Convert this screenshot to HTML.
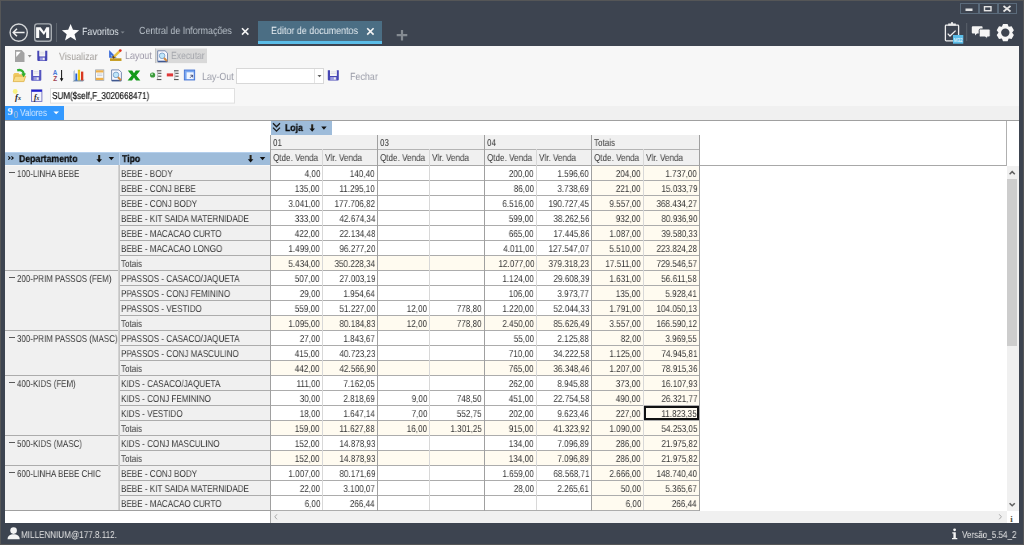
<!DOCTYPE html><html><head><meta charset="utf-8"><style>
*{margin:0;padding:0;box-sizing:border-box}
html,body{width:1024px;height:545px;overflow:hidden;background:#3d4450;font-family:"Liberation Sans",sans-serif}
body{position:relative}
.a{position:absolute}
.t{position:absolute;white-space:nowrap;font-size:10px;line-height:14px;height:14px;transform:scale(0.81,1);transform-origin:0 0;color:#363636;text-rendering:geometricPrecision;will-change:transform}
.tr{transform-origin:100% 0}
.b{font-weight:bold;transform:scaleX(0.87);color:#0a0a0a;-webkit-text-stroke:0.25px #0a0a0a}
.tt{font-size:10.4px;transform:scaleX(0.86)}
svg{position:absolute;overflow:visible}
</style></head><body><div class="a" style="left:0px;top:0px;width:1024px;height:545px;background:#3d4450;"></div>
<div class="a" style="left:5px;top:46px;width:1014px;height:477px;background:#f7f7f7;"></div>
<div class="a" style="left:5px;top:106px;width:1014px;height:14px;background:#f0f0f0;"></div>
<div class="a" style="left:5px;top:121px;width:1014px;height:402px;background:#ffffff;"></div>
<div class="a" style="left:258px;top:21px;width:124px;height:23px;background:#4b6e84;"></div>
<div class="a" style="left:258px;top:41px;width:124px;height:3px;background:#5bbde8;"></div>
<div class="a" style="left:271px;top:121px;width:61px;height:14px;background:#9ebcda;"></div>
<div class="a" style="left:270px;top:135px;width:429px;height:30px;background:#f0f0f0;"></div>
<div class="a" style="left:5px;top:152px;width:114px;height:13px;background:#9ebcda;"></div>
<div class="a" style="left:120px;top:152px;width:150px;height:13px;background:#9ebcda;"></div>
<div class="a" style="left:5px;top:166px;width:265px;height:344px;background:#f0f0f0;"></div>
<div class="a" style="left:592px;top:166px;width:107px;height:344px;background:#fffbf0;"></div>
<div class="a" style="left:271px;top:256px;width:320px;height:14px;background:#fffbf0;"></div>
<div class="a" style="left:271px;top:316px;width:320px;height:14px;background:#fffbf0;"></div>
<div class="a" style="left:271px;top:361px;width:320px;height:14px;background:#fffbf0;"></div>
<div class="a" style="left:271px;top:421px;width:320px;height:14px;background:#fffbf0;"></div>
<div class="a" style="left:271px;top:451px;width:320px;height:14px;background:#fffbf0;"></div>
<div class="a" style="left:644px;top:406px;width:55px;height:14px;border:2px solid #111;z-index:2"></div>
<div class="a" style="left:9px;top:172px;width:6px;height:1px;background:#5a5a5a;"></div>
<div class="a" style="left:9px;top:277px;width:6px;height:1px;background:#5a5a5a;"></div>
<div class="a" style="left:9px;top:337px;width:6px;height:1px;background:#5a5a5a;"></div>
<div class="a" style="left:9px;top:382px;width:6px;height:1px;background:#5a5a5a;"></div>
<div class="a" style="left:9px;top:442px;width:6px;height:1px;background:#5a5a5a;"></div>
<div class="a" style="left:9px;top:472px;width:6px;height:1px;background:#5a5a5a;"></div>
<div class="a" style="left:1007px;top:166px;width:12px;height:345px;background:#f0f0f0;"></div>
<div class="a" style="left:1007px;top:179px;width:10px;height:167px;background:#cdcdcd;"></div>
<div class="a" style="left:271px;top:511px;width:736px;height:12px;background:#f0f0f0;"></div>
<div class="a" style="left:5px;top:120px;width:1014px;height:1px;background:#a0a0a0"></div>
<div class="a" style="left:0px;top:0px;width:1024px;height:1px;background:#555657"></div>
<div class="a" style="left:0px;top:0px;width:1px;height:545px;background:#555657"></div>
<div class="a" style="left:1023px;top:0px;width:1px;height:545px;background:#555657"></div>
<div class="a" style="left:0px;top:544px;width:1024px;height:1px;background:#555657"></div>
<div class="a" style="left:56px;top:23px;width:1px;height:19px;background:#5c636c"></div>
<div class="a" style="left:270px;top:149px;width:429px;height:1px;background:#b4b4b4"></div>
<div class="a" style="left:270px;top:165px;width:736px;height:1px;background:#a8a8a8"></div>
<div class="a" style="left:5px;top:165px;width:265px;height:1px;background:#f6f6f6"></div>
<div class="a" style="left:120px;top:180px;width:579px;height:1px;background:#acacac"></div>
<div class="a" style="left:120px;top:195px;width:579px;height:1px;background:#acacac"></div>
<div class="a" style="left:120px;top:210px;width:579px;height:1px;background:#acacac"></div>
<div class="a" style="left:120px;top:225px;width:579px;height:1px;background:#acacac"></div>
<div class="a" style="left:120px;top:240px;width:579px;height:1px;background:#acacac"></div>
<div class="a" style="left:120px;top:255px;width:579px;height:1px;background:#acacac"></div>
<div class="a" style="left:120px;top:270px;width:579px;height:1px;background:#acacac"></div>
<div class="a" style="left:120px;top:285px;width:579px;height:1px;background:#acacac"></div>
<div class="a" style="left:120px;top:300px;width:579px;height:1px;background:#acacac"></div>
<div class="a" style="left:120px;top:315px;width:579px;height:1px;background:#acacac"></div>
<div class="a" style="left:120px;top:330px;width:579px;height:1px;background:#acacac"></div>
<div class="a" style="left:120px;top:345px;width:579px;height:1px;background:#acacac"></div>
<div class="a" style="left:120px;top:360px;width:579px;height:1px;background:#acacac"></div>
<div class="a" style="left:120px;top:375px;width:579px;height:1px;background:#acacac"></div>
<div class="a" style="left:120px;top:390px;width:579px;height:1px;background:#acacac"></div>
<div class="a" style="left:120px;top:405px;width:579px;height:1px;background:#acacac"></div>
<div class="a" style="left:120px;top:420px;width:579px;height:1px;background:#acacac"></div>
<div class="a" style="left:120px;top:435px;width:579px;height:1px;background:#acacac"></div>
<div class="a" style="left:120px;top:450px;width:579px;height:1px;background:#acacac"></div>
<div class="a" style="left:120px;top:465px;width:579px;height:1px;background:#acacac"></div>
<div class="a" style="left:120px;top:480px;width:579px;height:1px;background:#acacac"></div>
<div class="a" style="left:120px;top:495px;width:579px;height:1px;background:#acacac"></div>
<div class="a" style="left:120px;top:510px;width:579px;height:1px;background:#acacac"></div>
<div class="a" style="left:5px;top:270px;width:115px;height:1px;background:#acacac"></div>
<div class="a" style="left:5px;top:330px;width:115px;height:1px;background:#acacac"></div>
<div class="a" style="left:5px;top:375px;width:115px;height:1px;background:#acacac"></div>
<div class="a" style="left:5px;top:435px;width:115px;height:1px;background:#acacac"></div>
<div class="a" style="left:5px;top:465px;width:115px;height:1px;background:#acacac"></div>
<div class="a" style="left:5px;top:510px;width:115px;height:1px;background:#a0a0a0"></div>
<div class="a" style="left:270px;top:135px;width:1px;height:376px;background:#a0a0a0"></div>
<div class="a" style="left:322px;top:149px;width:1px;height:361px;background:#d8d8d8"></div>
<div class="a" style="left:377px;top:135px;width:1px;height:376px;background:#a0a0a0"></div>
<div class="a" style="left:429px;top:149px;width:1px;height:361px;background:#d8d8d8"></div>
<div class="a" style="left:484px;top:135px;width:1px;height:376px;background:#a0a0a0"></div>
<div class="a" style="left:536px;top:149px;width:1px;height:361px;background:#d8d8d8"></div>
<div class="a" style="left:591px;top:135px;width:1px;height:376px;background:#a0a0a0"></div>
<div class="a" style="left:643px;top:149px;width:1px;height:361px;background:#d8d8d8"></div>
<div class="a" style="left:699px;top:135px;width:1px;height:376px;background:#a0a0a0"></div>
<div class="a" style="left:118px;top:165px;width:1px;height:346px;background:#d2d2d2"></div>
<div class="a" style="left:119px;top:165px;width:1px;height:346px;background:#c4c4c4"></div>
<div class="a" style="left:1006px;top:121px;width:1px;height:45px;background:#b0b0b0"></div>
<div class="a" style="left:270px;top:511px;width:1px;height:12px;background:#a8a8a8"></div>
<div class="a" style="left:5px;top:510px;width:265px;height:1px;background:#a0a0a0"></div>
<svg style="left:0;top:0" width="140" height="46"><circle cx="18.7" cy="32.6" r="8.6" fill="none" stroke="#d4d6d8" stroke-width="1.4"/><path d="M13.3 32.5H24.6M17 28.7L13.2 32.5L17 36.3" fill="none" stroke="#f0f0f0" stroke-width="1.5"/><rect x="34.7" y="23.9" width="16.6" height="17.4" rx="2.5" fill="none" stroke="#a8adb2" stroke-width="1.4"/><path d="M36.1 38.1V27.2H40.7L43.9 31.7L46.3 27.2H49.2V38.1H46.1V31.6L43.9 34.9L39.2 29.6V38.1Z" fill="#fafafa"/><path d="M70.6 23.9L73 29.8L79.2 30.2L74.5 34.3L76.2 40.6L70.6 37.1L65 40.6L66.7 34.3L61.9 30.2L68.2 29.8Z" fill="#fcfcfc"/><path d="M120.6 31.4H124.6L122.6 33.6Z" fill="#7f868e"/></svg>
<svg style="left:0;top:0" width="420" height="46"><path d="M242 28.2L248.4 34.6M248.4 28.2L242 34.6" stroke="#f4f4f4" stroke-width="1.6"/><path d="M367.2 28.2L373.6 34.6M373.6 28.2L367.2 34.6" stroke="#f4f4f4" stroke-width="1.6"/><path d="M402 30V40.5M396.7 35.2H407.3" stroke="#858b92" stroke-width="2.2"/></svg>
<svg style="left:950px;top:0" width="74" height="50"><rect x="10.5" y="3.5" width="18" height="10" fill="none" stroke="#5b6b7b"/><rect x="29.5" y="3.5" width="18" height="10" fill="none" stroke="#5b6b7b"/><rect x="48.5" y="3.5" width="18" height="10" fill="none" stroke="#5b6b7b"/><rect x="15.5" y="8.5" width="7" height="2.5" fill="#e4e4e4"/><rect x="34.5" y="6.7" width="6.5" height="4" fill="none" stroke="#e4e4e4" stroke-width="1.4"/><path d="M53.5 6L60.5 11.5M60.5 6L53.5 11.5" stroke="#e8e8e8" stroke-width="1.7"/><rect x="-4.6" y="25.2" width="13.2" height="15.6" rx="0.8" fill="none" stroke="#eeeeee" stroke-width="1.3"/><path d="M-1.2 25.5V24.2H5.2V25.5" fill="#eeeeee" stroke="#eeeeee" stroke-width="1.2"/><circle cx="2" cy="23.2" r="1.1" fill="#eeeeee"/><path d="M-2.3 33.6L0 36L5.6 30.6" fill="none" stroke="#eeeeee" stroke-width="1.3"/><rect x="3" y="35" width="10.3" height="8.7" fill="#5bbde8"/><text x="8.2" y="42" font-size="5.6" fill="#ffffff" text-anchor="middle" font-family="Liberation Sans" transform="translate(8.2 0) scale(0.8 1) translate(-8.2 0)">M32</text><path d="M16.7 23V41" stroke="#5a616b" stroke-width="1"/><path d="M22.8 26.3H31.6Q32.6 26.3 32.6 27.3V32.6Q32.6 33.6 31.6 33.6H27L25 35.6V33.6H22.8Q21.8 33.6 21.8 32.6V27.3Q21.8 26.3 22.8 26.3Z" fill="#f4f4f4"/><path d="M30.4 29H39Q40.2 29 40.2 30.2V35.8Q40.2 37 39 37H37.6L35.4 39.2V37H30.4Q29.2 37 29.2 35.8V30.2Q29.2 29 30.4 29Z" fill="#f4f4f4" stroke="#3d4450" stroke-width="1"/></svg>
<svg style="left:0;top:0" width="1024" height="50"><path fill-rule="evenodd" fill="#f6f6f6" d="M1001.99,26.54 L1003.01,24.00 L1007.59,24.00 L1008.61,26.54 L1008.89,26.71 L1011.60,26.32 L1013.89,30.28 L1012.20,32.44 L1012.20,32.76 L1013.89,34.92 L1011.60,38.88 L1008.89,38.49 L1008.61,38.66 L1007.59,41.20 L1003.01,41.20 L1001.99,38.66 L1001.71,38.49 L999.00,38.88 L996.71,34.92 L998.40,32.76 L998.40,32.44 L996.71,30.28 L999.00,26.32 L1001.71,26.71 Z M1009.5,32.6 A4.2,4.2 0 1 0 1001.0999999999999,32.6 A4.2,4.2 0 1 0 1009.5,32.6 Z"/></svg>
<svg style="left:0;top:0" width="400" height="125"><path d="M15 50H21.6L24.5 52.9V62H15Z" fill="#a3a3a3"/><path d="M16.2 51.8H20.8L16.2 57Z" fill="#ffffff"/><path d="M27.8 55H31.6L29.7 57.4Z" fill="#8e8e8e"/><path d="M37.3 50.7H39.5V56.31H45.099999999999994V50.7H47.3V59.900000000000006Q47.3 60.900000000000006 46.3 60.900000000000006H38.3Q37.3 60.900000000000006 37.3 59.900000000000006Z" fill="#4646b4"/><rect x="39.5" y="50.7" width="5.6" height="5.61" fill="#f6f6f6"/><path d="M40.099999999999994 52.300000000000004H44.5M40.099999999999994 53.900000000000006H44.5" stroke="#c8c8d8" stroke-width="0.5"/><rect x="39.699999999999996" y="57.432" width="5.2" height="3.0599999999999996" fill="#9a9ae0"/><rect x="42.8" y="57.84" width="1.7999999999999998" height="2.04" fill="#f0f0f0"/><path d="M109.1 50.1L116.7 57.7H109.1Z" fill="#3a6ad8"/><path d="M110.8 54.6V56.5H113Z" fill="#9cc0f0"/><rect x="110" y="58.3" width="11.5" height="2.7" fill="#c8a028"/><path d="M110.5 59.2H121" stroke="#8a6a10" stroke-width="0.5" stroke-dasharray="0.6 0.6"/><path d="M112.8 57.8L120 50.8" stroke="#e8c040" stroke-width="2.4"/><path d="M112.8 57.8L114.2 56.6" stroke="#604020" stroke-width="2.4"/><circle cx="120.3" cy="50.6" r="1.4" fill="#e03020"/><rect x="155" y="48.5" width="52" height="14.6" fill="#d9d9d9"/><path d="M155.5 48.5V63" stroke="#c4c4c4"/><path d="M157.7 50.8H165.1L167.5 53.199999999999996V61.8H157.7Z" fill="#f8f8ff" stroke="#6c80a8" stroke-width="0.9"/><path d="M158.1 61.4H167.1" stroke="#405890" stroke-width="1.4"/><circle cx="162.1" cy="55.8" r="2.8" fill="#bfe6fb" stroke="#7aa0c8" stroke-width="0.9"/><path d="M164.0 58.0L167.0 61.099999999999994" stroke="#d08a40" stroke-width="2"/><path d="M13.2 74.5L14.5 73H18.5L19.5 74.2H24.4V81.6H13.2Z" fill="#f0c860"/><path d="M13.1 81.6L15.2 76.2H25.8L23.8 81.6Z" fill="#f8dc88" stroke="#d8a838" stroke-width="0.6"/><path d="M17.2 70.3C20.5 69.3 23.3 70.8 23.8 74.2" fill="none" stroke="#30b030" stroke-width="2.3"/><path d="M21.3 73.6H26L23.6 77.3Z" fill="#30b030"/><path d="M31.1 69.9H33.300000000000004V75.89500000000001H39.099999999999994V69.9H41.3V79.80000000000001Q41.3 80.80000000000001 40.3 80.80000000000001H32.1Q31.1 80.80000000000001 31.1 79.80000000000001Z" fill="#5656c0"/><rect x="33.300000000000004" y="69.9" width="5.799999999999999" height="5.995000000000001" fill="#f6f6f6"/><path d="M33.9 71.5H38.5M33.9 73.10000000000001H38.5" stroke="#c8c8d8" stroke-width="0.5"/><rect x="33.5" y="77.09400000000001" width="5.3999999999999995" height="3.27" fill="#9a9ae0"/><rect x="36.71" y="77.53" width="1.8359999999999999" height="2.18" fill="#f0f0f0"/><text x="55.1" y="75.2" font-size="6.4" font-weight="bold" fill="#4a7ad8" text-anchor="middle" font-family="Liberation Sans">A</text><text x="55.1" y="81.4" font-size="6.4" font-weight="bold" fill="#a04050" text-anchor="middle" font-family="Liberation Sans">Z</text><path d="M61.6 70V79.5" stroke="#111" stroke-width="1"/><path d="M59.8 78.2H63.4L61.6 81.4Z" fill="#111"/><path d="M72.6 81.4L74.3 79.8H84.6L83 81.4Z" fill="#8098b0"/><path d="M73.3 80V71.5L75 69.8V80Z" fill="#b8c8d8"/><rect x="75.4" y="73.5" width="1.8" height="7" fill="#2060d8"/><rect x="77.9" y="69.8" width="2.2" height="10.5" fill="#e8c818"/><rect x="81" y="71.6" width="2.3" height="8.8" fill="#d83820"/><rect x="95.6" y="69.9" width="8.2" height="10.4" fill="#fafafa" stroke="#9aa0a8" stroke-width="0.8"/><rect x="96" y="70.3" width="7.4" height="2.2" fill="#f0b048"/><rect x="96" y="77.8" width="7.4" height="2.2" fill="#f0b048"/><path d="M97 74H102.4M97 75.6H102.4" stroke="#b0b8c8" stroke-width="0.6"/><path d="M111.6 69.9H119.0L121.39999999999999 72.30000000000001V80.9H111.6Z" fill="#f8f8ff" stroke="#6c80a8" stroke-width="0.9"/><path d="M112.0 80.5H121.0" stroke="#405890" stroke-width="1.4"/><circle cx="116.0" cy="74.9" r="2.8" fill="#bfe6fb" stroke="#7aa0c8" stroke-width="0.9"/><path d="M117.89999999999999 77.10000000000001L120.89999999999999 80.2" stroke="#d08a40" stroke-width="2"/><path d="M127.8 70.4H132.2L134 73.3L135.8 70.4H140.2L136.3 75.5L140.4 80.6H136L134 77.5L132 80.6H127.6L131.7 75.5Z" fill="#129a18"/><circle cx="152.6" cy="75" r="2.6" fill="#3a9a3a"/><circle cx="152" cy="74.3" r="1" fill="#b0e0b0"/><path d="M156.79999999999998 70.8H161.4M158.1 73.3H161.4M158.1 76.2H161.4M156.79999999999998 79.6H161.4" stroke="#303030" stroke-width="0.9"/><path d="M157.6 71V79.4" stroke="#909090" stroke-width="0.6"/><rect x="166.8" y="73.4" width="6.3" height="3" fill="#e03838"/><path d="M174.0 70.8H178.60000000000002M175.3 73.3H178.60000000000002M175.3 76.2H178.60000000000002M174.0 79.6H178.60000000000002" stroke="#303030" stroke-width="0.9"/><path d="M174.8 71V79.4" stroke="#909090" stroke-width="0.6"/><rect x="184.3" y="70" width="10.4" height="10" fill="#7aa8f0" stroke="#3a6ad0" stroke-width="0.8"/><rect x="186.6" y="72.3" width="7" height="6.8" fill="#f0f6ff"/><path d="M190 77.8L192.6 75.2M190.4 75.2H192.6V77.4" stroke="#303868" stroke-width="0.8" fill="none"/><rect x="236.5" y="68.5" width="87" height="15" fill="#fff" stroke="#d8d8d8"/><path d="M314.5 69V83" stroke="#e4e4e4"/><path d="M317.5 75H321.5L319.5 77.2Z" fill="#606060"/><path d="M327.8 70.3H330.0V75.91H336.6V70.3H338.8V79.5Q338.8 80.5 337.8 80.5H328.8Q327.8 80.5 327.8 79.5Z" fill="#4646b4"/><rect x="330.0" y="70.3" width="6.6" height="5.61" fill="#f6f6f6"/><path d="M330.6 71.89999999999999H336.0M330.6 73.5H336.0" stroke="#c8c8d8" stroke-width="0.5"/><rect x="330.2" y="77.032" width="6.2" height="3.0599999999999996" fill="#9a9ae0"/><rect x="333.85" y="77.44" width="1.98" height="2.04" fill="#f0f0f0"/><circle cx="15.2" cy="91.5" r="2.4" fill="#f8f060" opacity="0.8"/><text x="18" y="99.5" font-size="8.5" font-style="italic" font-weight="bold" fill="#222" text-anchor="middle" font-family="Liberation Serif">f<tspan font-size="6">x</tspan></text><rect x="31.5" y="89.8" width="10.4" height="11.6" fill="#f4f4fc" stroke="#7070c0" stroke-width="0.9"/><rect x="31.5" y="89.8" width="10.4" height="2" fill="#2020d0"/><text x="36.5" y="99.8" font-size="7.5" font-style="italic" font-weight="bold" fill="#222" text-anchor="middle" font-family="Liberation Serif">f<tspan font-size="5.5">x</tspan></text><rect x="50.5" y="88.5" width="184" height="14.6" fill="#fff" stroke="#e0e0e0"/><rect x="5" y="106" width="59" height="14" fill="#3399ff"/><path d="M53.4 111.6H59L56.2 114.2Z" fill="#fff"/><text x="7.6" y="115.4" font-size="10.5" font-weight="bold" fill="#eef6ff" font-family="Liberation Serif">9</text><text x="13.6" y="118.1" font-size="10.5" fill="#b4c4d4" font-family="Liberation Serif" transform="translate(13.6 0) scale(0.85 1) translate(-13.6 0)">0</text></svg>
<svg style="left:0;top:0" width="1024" height="545"><rect x="98.2" y="155" width="2" height="5" fill="#2a2418"/><path d="M96.4 159.3H102.0L99.2 162.5Z" fill="#111"/><path d="M108.6 157H114.1L111.35 160.3Z" fill="#111"/><rect x="249.6" y="155" width="2" height="5" fill="#2a2418"/><path d="M247.79999999999998 159.3H253.4L250.6 162.5Z" fill="#111"/><path d="M259.8 157H265.3L262.55 160.3Z" fill="#111"/><rect x="311.2" y="124.3" width="2" height="5" fill="#2a2418"/><path d="M309.4 128.6H315.0L312.2 131.8Z" fill="#111"/><path d="M321.2 126.4H326.7L323.95 129.70000000000002Z" fill="#111"/><path d="M273 123.3L276.5 126.8L280 123.3M273 127.6L276.5 131.1L280 127.6" fill="none" stroke="#1a1a1a" stroke-width="1.3"/><path d="M8.3 156.4L10.1 158L8.3 159.6M11.4 156.4L13.2 158L11.4 159.6" fill="none" stroke="#111" stroke-width="1.1"/><rect x="119" y="152" width="1" height="13" fill="#bcd6f2"/><rect x="5" y="152" width="114" height="1" fill="#b4cfec"/><rect x="120" y="152" width="150" height="1" fill="#b4cfec"/><path d="M1009.6 174.2L1012.2 171.6L1014.8 174.2" fill="none" stroke="#606060" stroke-width="1.5"/><path d="M1009.6 503.2L1012.2 505.8L1014.8 503.2" fill="none" stroke="#606060" stroke-width="1.5"/><path d="M277 514.3L274.8 516.8L277 519.3" fill="none" stroke="#a8a8a8" stroke-width="1"/><path d="M999.2 514.3L1001.4 516.8L999.2 519.3" fill="none" stroke="#a8a8a8" stroke-width="1"/><text x="1011.6" y="521.5" font-size="9" font-weight="bold" fill="#5a5040" font-family="Liberation Serif" text-anchor="middle">i</text><circle cx="13.6" cy="530.6" r="3.3" fill="#f4f4f4"/><path d="M7.6 539.3C7.6 535.8 10 534.3 13.6 534.3C17.2 534.3 19.7 535.8 19.7 539.3Z" fill="#f4f4f4"/><circle cx="954.6" cy="529.8" r="1.4" fill="#f4f4f4"/><path d="M952.3 532.3H955.8V538H957.3V539.3H952V538H953.4V533.5H952.3Z" fill="#f4f4f4"/></svg>
<div class="t tt" style="left:82px;top:26px;color:#dfe5ea">Favoritos</div>
<div class="t tt" style="left:139px;top:25px;color:#b9c1c9">Central de Informa&ccedil;&otilde;es</div>
<div class="t tt" style="left:271px;top:25px;color:#e6edf2">Editor de documentos</div>
<div class="t tt" style="left:59px;top:51px;color:#a09c98">Visualizar</div>
<div class="t tt" style="left:124.5px;top:50px;color:#9a96a6">Layout</div>
<div class="t tt" style="left:171px;top:50px;color:#a4a6ac;transform:scaleX(.82)">Executar</div>
<div class="t tt" style="left:202px;top:71px;color:#9a9ca8">Lay-Out</div>
<div class="t tt" style="left:350px;top:71px;color:#9a9ca8">Fechar</div>
<div class="t" style="left:52px;top:90px;color:#111;font-weight:500;-webkit-text-stroke:0.2px #111">SUM($self,F_3020668471)</div>
<div class="t" style="left:20px;top:107px;color:#d4e8ff">Valores</div>
<div class="t b" style="left:285px;top:122px;">Loja</div>
<div class="t" style="left:273px;top:137px;">01</div>
<div class="t" style="left:273px;top:152px;">Qtde. Venda</div>
<div class="t" style="left:325px;top:152px;">Vlr. Venda</div>
<div class="t" style="left:380px;top:137px;">03</div>
<div class="t" style="left:380px;top:152px;">Qtde. Venda</div>
<div class="t" style="left:432px;top:152px;">Vlr. Venda</div>
<div class="t" style="left:487px;top:137px;">04</div>
<div class="t" style="left:487px;top:152px;">Qtde. Venda</div>
<div class="t" style="left:539px;top:152px;">Vlr. Venda</div>
<div class="t" style="left:594px;top:137px;">Totais</div>
<div class="t" style="left:594px;top:152px;">Qtde. Venda</div>
<div class="t" style="left:646px;top:152px;">Vlr. Venda</div>
<div class="t b" style="left:19px;top:153px;">Departamento</div>
<div class="t b" style="left:122px;top:153px;">Tipo</div>
<div class="t tr" style="right:704px;top:168px;">4,00</div>
<div class="t tr" style="right:649px;top:168px;">140,40</div>
<div class="t tr" style="right:490px;top:168px;">200,00</div>
<div class="t tr" style="right:435px;top:168px;">1.596,60</div>
<div class="t tr" style="right:383px;top:168px;">204,00</div>
<div class="t tr" style="right:327px;top:168px;">1.737,00</div>
<div class="t" style="left:121px;top:168px;">BEBE - BODY</div>
<div class="t" style="left:17px;top:168px;transform:scale(.795,1)">100-LINHA BEBE</div>
<div class="t tr" style="right:704px;top:183px;">135,00</div>
<div class="t tr" style="right:649px;top:183px;">11.295,10</div>
<div class="t tr" style="right:490px;top:183px;">86,00</div>
<div class="t tr" style="right:435px;top:183px;">3.738,69</div>
<div class="t tr" style="right:383px;top:183px;">221,00</div>
<div class="t tr" style="right:327px;top:183px;">15.033,79</div>
<div class="t" style="left:121px;top:183px;">BEBE - CONJ BEBE</div>
<div class="t tr" style="right:704px;top:198px;">3.041,00</div>
<div class="t tr" style="right:649px;top:198px;">177.706,82</div>
<div class="t tr" style="right:490px;top:198px;">6.516,00</div>
<div class="t tr" style="right:435px;top:198px;">190.727,45</div>
<div class="t tr" style="right:383px;top:198px;">9.557,00</div>
<div class="t tr" style="right:327px;top:198px;">368.434,27</div>
<div class="t" style="left:121px;top:198px;">BEBE - CONJ BODY</div>
<div class="t tr" style="right:704px;top:213px;">333,00</div>
<div class="t tr" style="right:649px;top:213px;">42.674,34</div>
<div class="t tr" style="right:490px;top:213px;">599,00</div>
<div class="t tr" style="right:435px;top:213px;">38.262,56</div>
<div class="t tr" style="right:383px;top:213px;">932,00</div>
<div class="t tr" style="right:327px;top:213px;">80.936,90</div>
<div class="t" style="left:121px;top:213px;">BEBE - KIT SAIDA MATERNIDADE</div>
<div class="t tr" style="right:704px;top:228px;">422,00</div>
<div class="t tr" style="right:649px;top:228px;">22.134,48</div>
<div class="t tr" style="right:490px;top:228px;">665,00</div>
<div class="t tr" style="right:435px;top:228px;">17.445,86</div>
<div class="t tr" style="right:383px;top:228px;">1.087,00</div>
<div class="t tr" style="right:327px;top:228px;">39.580,33</div>
<div class="t" style="left:121px;top:228px;">BEBE - MACACAO CURTO</div>
<div class="t tr" style="right:704px;top:243px;">1.499,00</div>
<div class="t tr" style="right:649px;top:243px;">96.277,20</div>
<div class="t tr" style="right:490px;top:243px;">4.011,00</div>
<div class="t tr" style="right:435px;top:243px;">127.547,07</div>
<div class="t tr" style="right:383px;top:243px;">5.510,00</div>
<div class="t tr" style="right:327px;top:243px;">223.824,28</div>
<div class="t" style="left:121px;top:243px;">BEBE - MACACAO LONGO</div>
<div class="t tr" style="right:704px;top:258px;">5.434,00</div>
<div class="t tr" style="right:649px;top:258px;">350.228,34</div>
<div class="t tr" style="right:490px;top:258px;">12.077,00</div>
<div class="t tr" style="right:435px;top:258px;">379.318,23</div>
<div class="t tr" style="right:383px;top:258px;">17.511,00</div>
<div class="t tr" style="right:327px;top:258px;">729.546,57</div>
<div class="t" style="left:121px;top:258px;">Totais</div>
<div class="t tr" style="right:704px;top:273px;">507,00</div>
<div class="t tr" style="right:649px;top:273px;">27.003,19</div>
<div class="t tr" style="right:490px;top:273px;">1.124,00</div>
<div class="t tr" style="right:435px;top:273px;">29.608,39</div>
<div class="t tr" style="right:383px;top:273px;">1.631,00</div>
<div class="t tr" style="right:327px;top:273px;">56.611,58</div>
<div class="t" style="left:121px;top:273px;">PPASSOS - CASACO/JAQUETA</div>
<div class="t" style="left:17px;top:273px;transform:scale(.795,1)">200-PRIM PASSOS (FEM)</div>
<div class="t tr" style="right:704px;top:288px;">29,00</div>
<div class="t tr" style="right:649px;top:288px;">1.954,64</div>
<div class="t tr" style="right:490px;top:288px;">106,00</div>
<div class="t tr" style="right:435px;top:288px;">3.973,77</div>
<div class="t tr" style="right:383px;top:288px;">135,00</div>
<div class="t tr" style="right:327px;top:288px;">5.928,41</div>
<div class="t" style="left:121px;top:288px;">PPASSOS - CONJ FEMININO</div>
<div class="t tr" style="right:704px;top:303px;">559,00</div>
<div class="t tr" style="right:649px;top:303px;">51.227,00</div>
<div class="t tr" style="right:597px;top:303px;">12,00</div>
<div class="t tr" style="right:542px;top:303px;">778,80</div>
<div class="t tr" style="right:490px;top:303px;">1.220,00</div>
<div class="t tr" style="right:435px;top:303px;">52.044,33</div>
<div class="t tr" style="right:383px;top:303px;">1.791,00</div>
<div class="t tr" style="right:327px;top:303px;">104.050,13</div>
<div class="t" style="left:121px;top:303px;">PPASSOS - VESTIDO</div>
<div class="t tr" style="right:704px;top:318px;">1.095,00</div>
<div class="t tr" style="right:649px;top:318px;">80.184,83</div>
<div class="t tr" style="right:597px;top:318px;">12,00</div>
<div class="t tr" style="right:542px;top:318px;">778,80</div>
<div class="t tr" style="right:490px;top:318px;">2.450,00</div>
<div class="t tr" style="right:435px;top:318px;">85.626,49</div>
<div class="t tr" style="right:383px;top:318px;">3.557,00</div>
<div class="t tr" style="right:327px;top:318px;">166.590,12</div>
<div class="t" style="left:121px;top:318px;">Totais</div>
<div class="t tr" style="right:704px;top:333px;">27,00</div>
<div class="t tr" style="right:649px;top:333px;">1.843,67</div>
<div class="t tr" style="right:490px;top:333px;">55,00</div>
<div class="t tr" style="right:435px;top:333px;">2.125,88</div>
<div class="t tr" style="right:383px;top:333px;">82,00</div>
<div class="t tr" style="right:327px;top:333px;">3.969,55</div>
<div class="t" style="left:121px;top:333px;">PPASSOS - CASACO/JAQUETA</div>
<div class="t" style="left:17px;top:333px;transform:scale(.795,1)">300-PRIM PASSOS (MASC)</div>
<div class="t tr" style="right:704px;top:348px;">415,00</div>
<div class="t tr" style="right:649px;top:348px;">40.723,23</div>
<div class="t tr" style="right:490px;top:348px;">710,00</div>
<div class="t tr" style="right:435px;top:348px;">34.222,58</div>
<div class="t tr" style="right:383px;top:348px;">1.125,00</div>
<div class="t tr" style="right:327px;top:348px;">74.945,81</div>
<div class="t" style="left:121px;top:348px;">PPASSOS - CONJ MASCULINO</div>
<div class="t tr" style="right:704px;top:363px;">442,00</div>
<div class="t tr" style="right:649px;top:363px;">42.566,90</div>
<div class="t tr" style="right:490px;top:363px;">765,00</div>
<div class="t tr" style="right:435px;top:363px;">36.348,46</div>
<div class="t tr" style="right:383px;top:363px;">1.207,00</div>
<div class="t tr" style="right:327px;top:363px;">78.915,36</div>
<div class="t" style="left:121px;top:363px;">Totais</div>
<div class="t tr" style="right:704px;top:378px;">111,00</div>
<div class="t tr" style="right:649px;top:378px;">7.162,05</div>
<div class="t tr" style="right:490px;top:378px;">262,00</div>
<div class="t tr" style="right:435px;top:378px;">8.945,88</div>
<div class="t tr" style="right:383px;top:378px;">373,00</div>
<div class="t tr" style="right:327px;top:378px;">16.107,93</div>
<div class="t" style="left:121px;top:378px;">KIDS - CASACO/JAQUETA</div>
<div class="t" style="left:17px;top:378px;transform:scale(.795,1)">400-KIDS (FEM)</div>
<div class="t tr" style="right:704px;top:393px;">30,00</div>
<div class="t tr" style="right:649px;top:393px;">2.818,69</div>
<div class="t tr" style="right:597px;top:393px;">9,00</div>
<div class="t tr" style="right:542px;top:393px;">748,50</div>
<div class="t tr" style="right:490px;top:393px;">451,00</div>
<div class="t tr" style="right:435px;top:393px;">22.754,58</div>
<div class="t tr" style="right:383px;top:393px;">490,00</div>
<div class="t tr" style="right:327px;top:393px;">26.321,77</div>
<div class="t" style="left:121px;top:393px;">KIDS - CONJ FEMININO</div>
<div class="t tr" style="right:704px;top:408px;">18,00</div>
<div class="t tr" style="right:649px;top:408px;">1.647,14</div>
<div class="t tr" style="right:597px;top:408px;">7,00</div>
<div class="t tr" style="right:542px;top:408px;">552,75</div>
<div class="t tr" style="right:490px;top:408px;">202,00</div>
<div class="t tr" style="right:435px;top:408px;">9.623,46</div>
<div class="t tr" style="right:383px;top:408px;">227,00</div>
<div class="t tr" style="right:327px;top:408px;">11.823,35</div>
<div class="t" style="left:121px;top:408px;">KIDS - VESTIDO</div>
<div class="t tr" style="right:704px;top:423px;">159,00</div>
<div class="t tr" style="right:649px;top:423px;">11.627,88</div>
<div class="t tr" style="right:597px;top:423px;">16,00</div>
<div class="t tr" style="right:542px;top:423px;">1.301,25</div>
<div class="t tr" style="right:490px;top:423px;">915,00</div>
<div class="t tr" style="right:435px;top:423px;">41.323,92</div>
<div class="t tr" style="right:383px;top:423px;">1.090,00</div>
<div class="t tr" style="right:327px;top:423px;">54.253,05</div>
<div class="t" style="left:121px;top:423px;">Totais</div>
<div class="t tr" style="right:704px;top:438px;">152,00</div>
<div class="t tr" style="right:649px;top:438px;">14.878,93</div>
<div class="t tr" style="right:490px;top:438px;">134,00</div>
<div class="t tr" style="right:435px;top:438px;">7.096,89</div>
<div class="t tr" style="right:383px;top:438px;">286,00</div>
<div class="t tr" style="right:327px;top:438px;">21.975,82</div>
<div class="t" style="left:121px;top:438px;">KIDS - CONJ MASCULINO</div>
<div class="t" style="left:17px;top:438px;transform:scale(.795,1)">500-KIDS (MASC)</div>
<div class="t tr" style="right:704px;top:453px;">152,00</div>
<div class="t tr" style="right:649px;top:453px;">14.878,93</div>
<div class="t tr" style="right:490px;top:453px;">134,00</div>
<div class="t tr" style="right:435px;top:453px;">7.096,89</div>
<div class="t tr" style="right:383px;top:453px;">286,00</div>
<div class="t tr" style="right:327px;top:453px;">21.975,82</div>
<div class="t" style="left:121px;top:453px;">Totais</div>
<div class="t tr" style="right:704px;top:468px;">1.007,00</div>
<div class="t tr" style="right:649px;top:468px;">80.171,69</div>
<div class="t tr" style="right:490px;top:468px;">1.659,00</div>
<div class="t tr" style="right:435px;top:468px;">68.568,71</div>
<div class="t tr" style="right:383px;top:468px;">2.666,00</div>
<div class="t tr" style="right:327px;top:468px;">148.740,40</div>
<div class="t" style="left:121px;top:468px;">BEBE - CONJ BODY</div>
<div class="t" style="left:17px;top:468px;transform:scale(.795,1)">600-LINHA BEBE CHIC</div>
<div class="t tr" style="right:704px;top:483px;">22,00</div>
<div class="t tr" style="right:649px;top:483px;">3.100,07</div>
<div class="t tr" style="right:490px;top:483px;">28,00</div>
<div class="t tr" style="right:435px;top:483px;">2.265,61</div>
<div class="t tr" style="right:383px;top:483px;">50,00</div>
<div class="t tr" style="right:327px;top:483px;">5.365,67</div>
<div class="t" style="left:121px;top:483px;">BEBE - KIT SAIDA MATERNIDADE</div>
<div class="t tr" style="right:704px;top:498px;">6,00</div>
<div class="t tr" style="right:649px;top:498px;">266,44</div>
<div class="t tr" style="right:383px;top:498px;">6,00</div>
<div class="t tr" style="right:327px;top:498px;">266,44</div>
<div class="t" style="left:121px;top:498px;">BEBE - MACACAO CURTO</div>
<div class="t" style="left:21px;top:529px;color:#e8e8e8">MILLENNIUM@177.8.112.</div>
<div class="t" style="left:962px;top:529px;color:#e8e8e8">Vers&atilde;o_5.54_2</div></body></html>
